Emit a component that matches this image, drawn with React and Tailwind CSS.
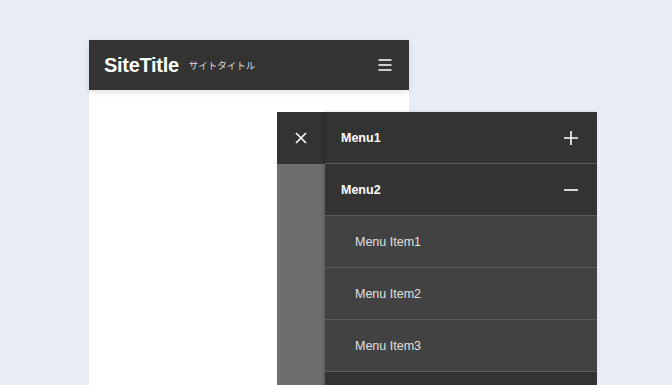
export default function App() {
  const items = ['Menu Item1', 'Menu Item2', 'Menu Item3']

  return (
    <div className="relative h-[385px] w-[672px] overflow-hidden bg-[#e8edf5] font-['Liberation_Sans','Noto_Sans_CJK_JP',sans-serif]">
      {/* phone frame */}
      <div className="absolute left-[89px] top-[40px] h-[400px] w-[320px] bg-white">
        <header className="flex h-[50px] items-center justify-between bg-[#333333] pl-[15px] pr-[16px] shadow-[0_2px_6px_rgba(0,0,0,0.12)]">
          <div className="flex items-center gap-[10px]">
            <span className="text-[20px] font-bold tracking-[-0.3px] text-white">SiteTitle</span>
            <span className="mt-[2px] text-[9.5px] text-[#dddddd]">サイトタイトル</span>
          </div>
          <svg width="16" height="14" viewBox="0 0 16 14" className="text-white">
            <path d="M1.5 2h13M1.5 7h13M1.5 12h13" stroke="currentColor" strokeWidth="1.6" />
          </svg>
        </header>
      </div>

      {/* drawer */}
      <div className="absolute left-[277px] top-[112px] flex h-[300px] w-[320px]">
        <div className="flex w-[48px] flex-col">
          <div className="flex h-[52px] items-center justify-center bg-[#333333]">
            <svg width="14" height="14" viewBox="0 0 14 14" className="text-white">
              <path d="M2 2l10 10M12 2L2 12" stroke="currentColor" strokeWidth="1.6" />
            </svg>
          </div>
          <div className="flex-1 bg-[#6e6e6e]" />
        </div>
        <div className="flex flex-1 flex-col bg-[#333333] shadow-[-2px_0_3px_rgba(0,0,0,0.15)]">
          <div className="flex h-[52px] items-center justify-between border-b border-[#5a5a5a] pl-[16px] pr-[18px]">
            <span className="pt-[2px] text-[12.5px] font-bold text-white">Menu1</span>
            <svg width="16" height="16" viewBox="0 0 16 16" className="text-white">
              <path d="M8 1v14M1 8h14" stroke="currentColor" strokeWidth="1.6" />
            </svg>
          </div>
          <div className="flex h-[52px] items-center justify-between border-b border-[#5a5a5a] pl-[16px] pr-[18px]">
            <span className="pt-[2px] text-[12.5px] font-bold text-white">Menu2</span>
            <svg width="16" height="16" viewBox="0 0 16 16" className="text-white">
              <path d="M1 8h14" stroke="currentColor" strokeWidth="1.6" />
            </svg>
          </div>
          {items.map((item) => (
            <div
              key={item}
              className="flex h-[52px] items-center border-b border-[#5a5a5a] bg-[#424242] pl-[30px]"
            >
              <span className="pt-[2px] text-[12.5px] text-[#e0e0e0]">{item}</span>
            </div>
          ))}
          <div className="flex-1 bg-[#333333]" />
        </div>
      </div>
    </div>
  )
}
